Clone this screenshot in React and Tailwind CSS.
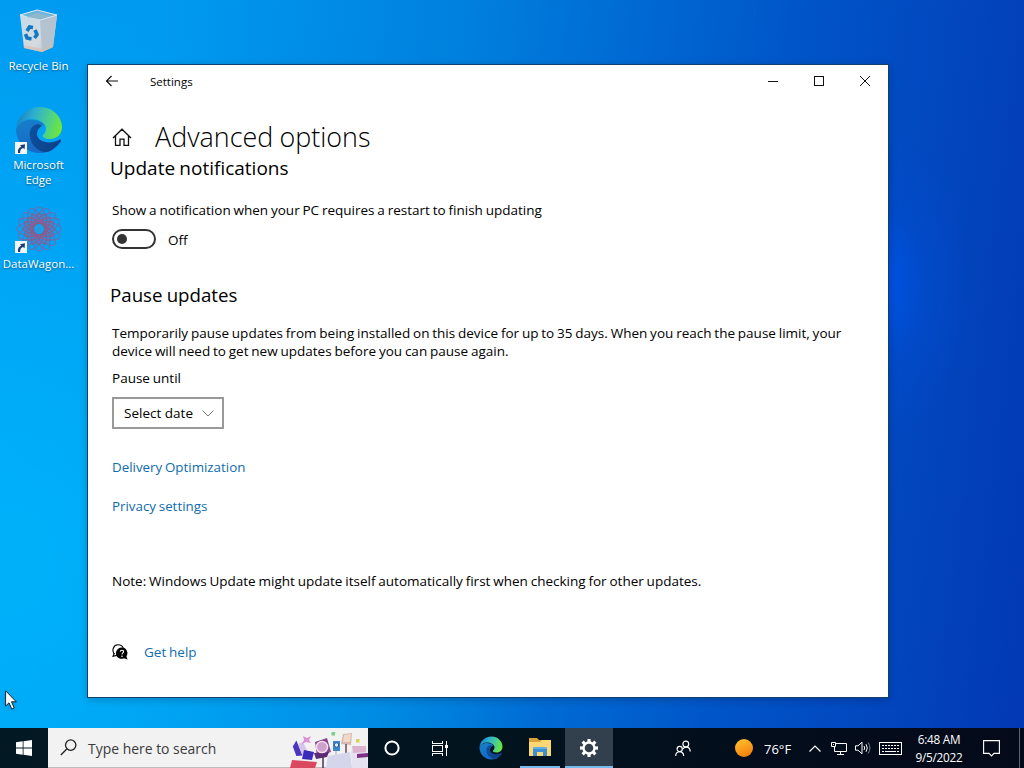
import { useState } from 'react';

function EdgeLogo({ id, className }) {
  return (
    <svg viewBox="0 0 48 48" className={className}>
      <defs>
        <linearGradient id={`${id}-top`} x1="0" y1="0.3" x2="1" y2="0.5">
          <stop offset="0" stopColor="#1580c8" />
          <stop offset="0.35" stopColor="#2badd0" />
          <stop offset="0.7" stopColor="#4bcf8f" />
          <stop offset="1" stopColor="#6ee63a" />
        </linearGradient>
        <linearGradient id={`${id}-body`} x1="0.2" y1="0" x2="0.5" y2="1">
          <stop offset="0" stopColor="#157fc9" />
          <stop offset="1" stopColor="#1768c4" />
        </linearGradient>
        <linearGradient id={`${id}-dark`} x1="0" y1="0" x2="1" y2="0.4">
          <stop offset="0" stopColor="#0d509f" />
          <stop offset="1" stopColor="#0d4288" />
        </linearGradient>
      </defs>
      <path fill={`url(#${id}-body)`} d="M1 23C1 35 10 47 25 47C31 47 36 45 39 43C31 43 23 37 22 30C21 24 25 19 29 19C25 13 6 10 1 23Z" />
      <path fill={`url(#${id}-dark)`} d="M20 19C12 23 14 35 20 41C25 46 31 47 35 45C41 42 44 38 46 35C46 34 45 33 44 34C35 39 22 36 22 28C22 24 24 22 27 20C25 18 22 18 20 19Z" />
      <path fill={`url(#${id}-top)`} d="M1 23C2 9 13 1 25 1C38 1 47 11 47 21C47 29 41 33 35 33C29 33 27 31 28 29C30 27 31 25 31 22C30 16 23 13 16 13C9 13 3 17 1 23Z" />
    </svg>
  );
}

function ShortcutArrow() {
  return (
    <svg viewBox="0 0 12 12" className="absolute bottom-0 left-0 size-3">
      <rect width="12" height="12" fill="#f4f7fa" />
      <path d="M3 11C2.5 7.5 4 5.5 6.3 4.8L5 3.2L10 2.2L9.6 7.3L8 6C5.7 6.8 5 8.5 5.2 11Z" fill="#1b3f73" />
    </svg>
  );
}

function RecycleBin() {
  return (
    <svg viewBox="0 0 40 44" className="h-11 w-10">
      <defs>
        <linearGradient id="bin" x1="0" y1="0" x2="1" y2="1">
          <stop offset="0" stopColor="#c3dcea" />
          <stop offset="0.6" stopColor="#d5dade" />
          <stop offset="1" stopColor="#b5bfca" />
        </linearGradient>
      </defs>
      <path d="M1 6L21 11L38 6L34 38L23 43L5 39Z" fill="url(#bin)" />
      <path d="M21 11L38 6L34 38L23 43Z" fill="#b4c3cf" />
      <path d="M1 6L18 1L38 6L21 11Z" fill="#6fb4da" stroke="#dcebf3" strokeWidth="1" />
      <path d="M7 8L18 4L32 7L21 10Z" fill="#8fb8cb" />
      <path d="M5 39L23 43L34 38L33.8 35L23 40L4.7 36Z" fill="#d8bda8" opacity="0.6" />
      <g fill="none" stroke="#1278c4" strokeWidth="3.6">
        <path d="M8 22L10.5 18L14 18.5" />
        <path d="M16 21L18 25.5L15.5 29" />
        <path d="M12.5 30L8 29L6.5 25" />
      </g>
    </svg>
  );
}

const PETALS = [0, 22.5, 45, 67.5, 90, 112.5, 135, 157.5];

function DataWagonLogo() {
  return (
    <svg viewBox="-24 -24 48 48" className="size-12" fill="none">
      {PETALS.map((a) => (
        <ellipse key={a} rx="22" ry="7.5" transform={`rotate(${a})`} stroke="#6d6db0" strokeWidth="1.1" />
      ))}
      {PETALS.map((a) => (
        <ellipse key={a} rx="16" ry="5.5" transform={`rotate(${a})`} stroke="#a35078" strokeWidth="0.9" opacity="0.75" />
      ))}
      <circle r="4" fill="#279be0" />
    </svg>
  );
}

function DesktopIcon({ label, children }) {
  return (
    <div className="flex w-[77px] flex-col items-center">
      <div className="relative flex size-12 items-center justify-center">{children}</div>
      <span className="mt-[3px] w-[77px] text-center text-[11.5px] leading-[15px] text-white [text-shadow:0_1px_2px_rgba(0,0,0,0.5)]">
        {label}
      </span>
    </div>
  );
}

function TitleBar() {
  return (
    <div className="flex h-8 shrink-0 items-center">
      <button className="flex h-8 w-12 items-center justify-center" aria-label="Back">
        <svg viewBox="0 0 14 12" className="h-3 w-3.5" fill="none" stroke="#111" strokeWidth="1.2">
          <path d="M13 6H1.5M6.5 1L1.5 6L6.5 11" />
        </svg>
      </button>
      <span className="ml-3.5 mt-0.5 text-[11.5px] leading-4">Settings</span>
      <div className="ml-auto flex" shapeRendering="crispEdges">
        <button className="flex h-8 w-[46px] items-center justify-center" aria-label="Minimize">
          <svg viewBox="0 0 10 10" className="size-2.5" stroke="#111">
            <path d="M0 5.5H10" />
          </svg>
        </button>
        <button className="flex h-8 w-[46px] items-center justify-center" aria-label="Maximize">
          <svg viewBox="0 0 10 10" className="size-2.5" stroke="#111" fill="none">
            <rect x="0.5" y="0.5" width="9" height="9" />
          </svg>
        </button>
        <button className="flex h-8 w-[46px] items-center justify-center" aria-label="Close">
          <svg viewBox="0 0 10 10" className="size-2.5" stroke="#111">
            <path d="M0 0L10 10M10 0L0 10" />
          </svg>
        </button>
      </div>
    </div>
  );
}

function SettingsWindow() {
  const [notify, setNotify] = useState(false);

  return (
    <section className="absolute left-[87px] top-16 flex h-[634px] w-[802px] flex-col border border-[#123f70] bg-white text-[13.52px] text-black shadow-[0_2px_8px_rgba(0,0,0,0.2)] [word-spacing:-0.7px]">
      <TitleBar />
      <div className="flex flex-col items-start px-6 leading-5">
        <div className="mt-5 flex h-10 items-center">
          <svg viewBox="0 0 20 20" className="size-5" fill="none" stroke="#111" strokeWidth="1.3">
            <path d="M1 11L10 2.2L19 11M3.5 8.8V18.3H8V12.2H12V18.3H16.5V8.8" />
          </svg>
          <h1 className="ml-[23px] text-[26.9px] font-[340] leading-10">Advanced options</h1>
        </div>
        <h2 className="-ml-0.5 h-6 text-[19px] leading-[23px]">Update notifications</h2>
        <p className="mt-[19px]">Show a notification when your PC requires a restart to finish updating</p>
        <div className="mt-[9px] flex h-5 items-center">
          <button
            role="switch"
            aria-checked={notify}
            onClick={() => setNotify(!notify)}
            className="flex h-5 w-11 items-center rounded-full border-2 border-[#333] px-[3px]"
          >
            <span className="size-2.5 rounded-full bg-[#333]" />
          </button>
          <span className="ml-3 mt-0.5">{notify ? 'On' : 'Off'}</span>
        </div>
        <h2 className="-ml-0.5 mt-[34px] h-6 text-[18.7px] leading-6">Pause updates</h2>
        <p className="mt-[17px] whitespace-nowrap leading-[18px]">
          Temporarily pause updates from being installed on this device for up to 35 days. When you reach the pause limit, your
          <br />
          device will need to get new updates before you can pause again.
        </p>
        <p className="mt-[9px] leading-[18px]">Pause until</p>
        <button className="mt-2.5 flex h-8 w-28 items-center justify-between border-2 border-[#999] pl-2.5 pr-2">
          Select date
          <svg viewBox="0 0 12 7" className="h-[7px] w-3" fill="none" stroke="#777">
            <path d="M0.5 0.5L6 6L11.5 0.5" />
          </svg>
        </button>
        <a href="#delivery" className="mt-7 text-[13.35px] text-[#0f6cad]">Delivery Optimization</a>
        <a href="#privacy" className="mt-[19px] text-[13.35px] text-[#0f6cad]">Privacy settings</a>
        <p className="mt-[55px]">Note: Windows Update might update itself automatically first when checking for other updates.</p>
        <div className="mt-[51px] flex h-5 items-center">
          <svg viewBox="0 0 16 16" className="size-4">
            <path d="M2.2 10.2C-0.5 6 1.5 0.8 6 0.8C8.5 0.8 10.5 2 11.2 4" fill="none" stroke="#000" strokeWidth="1.1" />
            <path d="M2.4 9.2L1 12.2L5 11.4" fill="none" stroke="#000" strokeWidth="1.1" />
            <path d="M10 3.6A5.6 5.6 0 1 0 12 14.2L15.6 15.6L14.4 12.4A5.6 5.6 0 0 0 10 3.6Z" fill="#000" />
            <path d="M8.2 7.6C8.4 5.8 11.8 5.9 11.6 7.8C11.5 8.9 10 9 10 10.4" fill="none" stroke="#fff" strokeWidth="1.1" />
            <circle cx="10" cy="12.2" r="0.8" fill="#fff" />
          </svg>
          <a href="#help" className="ml-4 text-[#0f6cad]">Get help</a>
        </div>
      </div>
    </section>
  );
}

function SearchArt() {
  return (
    <svg viewBox="0 0 78 40" className="h-10 w-[78px]">
      <g transform="rotate(-15 10 26)">
        <path d="M5 17L10 12L12 28L6 27Z" fill="#4935c0" />
        <path d="M11 16L16 15L18 26L12 28Z" fill="#d4c5ea" />
      </g>
      <path d="M14 22L24 24L22 32L12 31Z" fill="#3a2bbb" />
      <path d="M2 32L27 34L25 40H0Z" fill="#d94a60" />
      <path d="M13 8L17 10L21 8L19 12L21 15L16 14L12 16L14 12Z" fill="#dc91d7" />
      <path d="M25 14L37 10L41 24L27 28Z" fill="#85458f" />
      <path d="M24 25L39 24L37 29L26 31Z" fill="#5d2a76" />
      <circle cx="32" cy="19" r="5.6" fill="#cda2cd" stroke="#f4deee" strokeWidth="1.5" />
      <path d="M33 28V40" stroke="#493355" strokeWidth="1.5" />
      <rect x="43" y="13" width="7" height="10" fill="#3c86cb" />
      <circle cx="46.5" cy="17" r="2.2" fill="#def0fb" stroke="#275999" />
      <path d="M46 23V27" stroke="#a9a5c5" />
      <path d="M53 6L62 5L61 17L51 16Z" fill="#d7b7ae" />
      <path d="M54 7L61 6L60 14L53 14Z" fill="#efd9c9" />
      <path d="M56 16V26" stroke="#754558" strokeWidth="1.5" />
      <rect x="41.5" y="4" width="3.5" height="3.5" fill="#79cf83" />
      <rect x="66" y="11" width="3.5" height="3.5" fill="#d6d05d" />
      <path d="M38 28L60 24L62 40H36Z" fill="#d5d6ec" />
      <path d="M61 23L76 19L78 40H62Z" fill="#e4e1f0" />
      <path d="M62 18L76 18V24L63 25Z" fill="#ddb2ce" />
      <path d="M67 26L78 25V29L67 30Z" fill="#803086" />
    </svg>
  );
}

function Taskbar() {
  return (
    <footer className="flex h-10 shrink-0 items-center bg-[linear-gradient(90deg,#021923_0%,#02131e_50%,#030d1c_75%,#040a19_100%)] text-white">
      <button className="flex h-10 w-12 items-center justify-center" aria-label="Start">
        <svg viewBox="0 0 16 16" className="size-4" fill="#fff">
          <path d="M0 2.3L6.7 1.3V7.5H0ZM7.5 1.2L16 0V7.5H7.5ZM0 8.4H6.7V14.7L0 13.7ZM7.5 8.4H16V16L7.5 14.8Z" />
        </svg>
      </button>
      <div className="flex h-10 w-80 items-center border-b border-[#b9bdc0] bg-[#f2f2f2] pl-3 text-[#3b3b3b]">
        <svg viewBox="0 0 17 17" className="size-[17px]" fill="none" stroke="#222" strokeWidth="1.3">
          <circle cx="10.7" cy="6.1" r="5.2" />
          <path d="M7 9.8L0.8 16" />
        </svg>
        <span className="ml-[11px] mt-0.5 text-[13.95px] leading-5">Type here to search</span>
        <div className="ml-auto">
          <SearchArt />
        </div>
      </div>
      <div className="flex h-10 w-12 items-center justify-center">
        <svg viewBox="0 0 16 16" className="size-4" fill="none" stroke="#fff" strokeWidth="2">
          <circle cx="8" cy="8" r="6.6" />
        </svg>
      </div>
      <div className="flex h-10 w-12 items-center justify-center">
        <svg viewBox="0 0 17 15" className="h-[15px] w-[17px]" fill="none" stroke="#fff" shapeRendering="crispEdges">
          <path d="M0.5 0V2.5H10.5V0M0.5 15V12.5H10.5V15M0.5 4.5H10.5V10.5H0.5ZM14.5 0V15" />
          <rect x="13.5" y="4.5" width="2" height="2" fill="#fff" />
        </svg>
      </div>
      <div className="flex h-10 w-[54px] items-center justify-center">
        <EdgeLogo id="edge-task" className="size-6" />
      </div>
      <div className="flex h-10 w-11 items-center justify-center px-px">
        <div className="flex h-10 w-10 items-center justify-center border-b-2 border-[#76b9ed]">
          <svg viewBox="0 0 22 20" className="h-5 w-[22px]">
            <path d="M0 1H8L10 3H21V18H0Z" fill="#dca234" />
            <path d="M0 5H11L13 3H22V19H0Z" fill="#fbd873" />
            <path d="M4 19V12Q4 10 6 10H16Q18 10 18 12V19H14V15H8V19Z" fill="#3d8ed2" />
            <path d="M6 10H16Q18 10 18 12H4Q4 10 6 10Z" fill="#65aee5" />
          </svg>
        </div>
      </div>
      <div className="ml-[3px] flex h-10 w-12 items-center justify-center border-b-2 border-[#76b9ed] bg-[#323f4c]">
        <svg viewBox="-10 -10 20 20" className="mt-0.5 size-5" fill="none" stroke="#fff">
          <circle r="5.5" strokeWidth="2.4" />
          {[0, 45, 90, 135, 180, 225, 270, 315].map((a) => (
            <path key={a} d="M0 -6V-9" strokeWidth="3.2" transform={`rotate(${a})`} />
          ))}
        </svg>
      </div>
      <div className="ml-auto flex h-10 w-[361px] items-center">
        <svg viewBox="0 0 16 17" className="ml-[12px] h-[17px] w-4" fill="none" stroke="#fff" strokeWidth="1.2">
          <circle cx="10.8" cy="4" r="2.9" />
          <circle cx="4.7" cy="9" r="2.6" />
          <path d="M0.7 16C0.7 10.3 8.7 10.3 8.7 16M8 8.8C9.8 6.2 15 6.2 15.2 11.5" />
        </svg>
        <svg viewBox="0 0 18 18" className="ml-11 size-[18px]">
          <defs>
            <linearGradient id="sun" x1="0.3" y1="0" x2="0.7" y2="1">
              <stop offset="0" stopColor="#ffc02c" />
              <stop offset="1" stopColor="#f47b0b" />
            </linearGradient>
          </defs>
          <circle cx="9" cy="9" r="9" fill="url(#sun)" />
        </svg>
        <span className="ml-[11px] mt-0.5 w-[28px] whitespace-nowrap text-[13px] leading-5">76°F</span>
        <svg viewBox="0 0 12 7" className="ml-[17px] h-[7px] w-3" fill="none" stroke="#fff" strokeWidth="1.2">
          <path d="M0.5 6.5L6 1L11.5 6.5" />
        </svg>
        <svg viewBox="0 0 17 14" className="ml-2.5 h-3.5 w-[17px]" fill="none" stroke="#fff">
          <path d="M5 2.5H15.5V10.5H3.5V5.5M9.5 10.5V13.5M6 13.5H13M0.5 1.5H4.5V5.5H0.5ZM2 3.5H3" />
        </svg>
        <svg viewBox="0 0 16 14" className="ml-[7px] h-3.5 w-4" fill="none" stroke="#fff">
          <path d="M0.5 4.8H3L7 1.2V12.8L3 9.2H0.5Z" />
          <path d="M9 5Q10.3 7 9 9M11 3.2Q13.6 7 11 10.8" />
          <path d="M13.2 1.5Q16.7 7 13.2 12.5" stroke="#7b838e" />
        </svg>
        <svg viewBox="0 0 23 13" className="ml-2 h-[13px] w-[23px]" fill="none" stroke="#fff">
          <rect x="0.5" y="0.5" width="22" height="12" />
          <path d="M3 3.5H20M3 6.5H20" strokeDasharray="2 1" />
          <path d="M3 9.5H5M6 9.5H17M18 9.5H20" />
        </svg>
        <div className="mb-px ml-[9px] w-[56px] whitespace-nowrap text-center text-[11.75px] leading-[18px] tracking-[-0.25px]">
          <div>6:48 AM</div>
          <div>9/5/2022</div>
        </div>
        <svg viewBox="0 0 17 17" className="ml-[16px] mt-px size-[17px]" fill="none" stroke="#fff" strokeWidth="1.1">
          <path d="M0.6 0.6H16.4V13.4H11L8.5 16L6 13.4H0.6Z" />
        </svg>
        <span className="ml-auto mr-1 h-10 w-px bg-[#5b6473]" />
      </div>
    </footer>
  );
}

export default function App() {
  return (
    <div className="flex h-[768px] w-[1024px] flex-col overflow-hidden font-['Open_Sans','Noto_Sans',sans-serif]">
      <main className="relative flex-1 bg-[radial-gradient(ellipse_90px_150px_at_882px_285px,rgba(0,84,236,0.85)_0%,rgba(0,78,215,0.35)_50%,rgba(0,72,200,0)_100%),linear-gradient(97deg,#009cf2_0%,#009af0_15%,#0080de_42%,#0055c8_72%,#0246be_87%,#0238b4_100%)]">
        <div className="absolute inset-0 bg-[radial-gradient(circle_at_0px_560px,rgba(0,190,255,0.65)_0px,rgba(0,180,255,0)_560px)]" />
        <div className="relative flex w-[77px] flex-col pt-[7px]">
          <div className="h-[99px]">
            <DesktopIcon label="Recycle Bin"><RecycleBin /></DesktopIcon>
          </div>
          <div className="h-[99px]">
            <DesktopIcon label="Microsoft Edge">
              <EdgeLogo id="edge-desk" className="size-12" />
              <ShortcutArrow />
            </DesktopIcon>
          </div>
          <DesktopIcon label="DataWagon...">
            <DataWagonLogo />
            <ShortcutArrow />
          </DesktopIcon>
        </div>
        <SettingsWindow />
        <svg viewBox="0 0 13 20" className="absolute left-[5px] top-[690px] h-5 w-[13px] drop-shadow">
          <path d="M0.6 0.8V16L4 12.8L6.8 19L9.2 18L6.5 11.8H11.3Z" fill="#fff" stroke="#111" strokeWidth="0.9" />
        </svg>
      </main>
      <Taskbar />
    </div>
  );
}
